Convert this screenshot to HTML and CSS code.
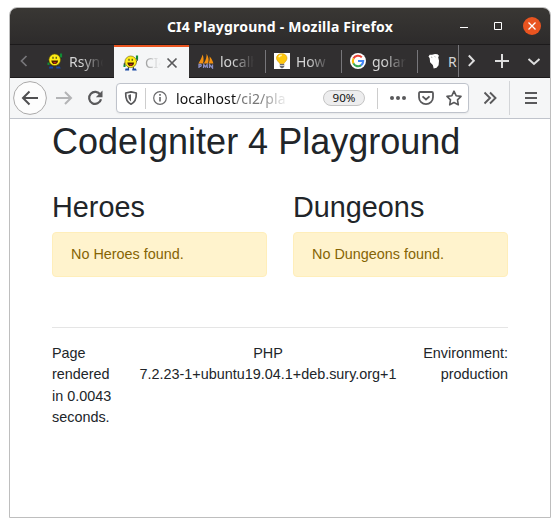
FILE: index.html
```html
<!DOCTYPE html>
<html lang="en">
<head>
<meta charset="utf-8">
<title>CI4 Playground</title>
<link rel="stylesheet" href="styles.css">
</head>
<body>
<svg class="defs" width="0" height="0">
  <defs>
    <symbol id="smiley" viewBox="0 0 16 16">
      <path d="M2.800 7 1 8.700l.8 1.700M12.700 7.500l1.600-2.200-.2-2.800M5.500 11.500l-.3 3M10 11.500l.8 3" fill="none" stroke="#222" stroke-width="1"/>
      <path d="M.5 9.500h2v2.500h-2zM12.900.4h2.200v4h-2.200z" fill="#118c35"/>
      <path d="M2.500 13.400h3.600v2H2zM9.300 13.400h3.500l1 2H9.300z" fill="#1746a5"/>
      <circle cx="7.700" cy="6.800" r="5.800" fill="#ffed14" stroke="#665c00" stroke-width=".6"/>
      <path d="M4.300 7.500h6.800c-.2 2.600-1.700 3.600-3.400 3.600S4.500 10 4.300 7.500z" fill="#4a1d00"/>
      <path d="M6 9.200h3.600L8 10.700z" fill="#e33324"/>
      <path d="M6 3.800v2M9.200 3.800v2" stroke="#222" stroke-width="1"/>
    </symbol>
  </defs>
</svg>
<div class="window">
  <header class="titlebar">
    <span class="title">CI4 Playground - Mozilla Firefox</span>
    <div class="controls">
      <svg width="10" height="20" viewBox="0 0 10 20"><path d="M1 11.500h8" stroke="#fff"/></svg>
      <svg width="10" height="20" viewBox="0 0 10 20"><path d="M1.500 6.500h7v7h-7z" fill="none" stroke="#fff"/></svg>
      <svg width="18" height="20" viewBox="0 0 18 20"><circle cx="9" cy="10" r="9" fill="#e95420"/><path d="m5.500 6.500 7 7m0-7-7 7" stroke="#fff" stroke-width="1.300"/></svg>
    </div>
  </header>

  <nav class="tabs">
    <div class="scroll-left"><svg width="10" height="14" viewBox="0 0 10 14"><path d="M7.500 2 2.500 7l5 5" fill="none" stroke="#77767a" stroke-width="1.700"/></svg></div>
    <div class="tab"><svg width="16" height="16"><use href="#smiley"/></svg><span class="label">Rsync</span></div>
    <div class="tab active"><svg width="16" height="16"><use href="#smiley"/></svg><span class="label">CI4</span>
      <svg class="close" width="12" height="12" viewBox="0 0 12 12"><path d="m1.500 1.500 9 9m0-9-9 9" stroke="#5a5a5c" stroke-width="1.700"/></svg></div>
    <div class="tab"><svg width="16" height="16" viewBox="0 0 16 16"><path d="M.4 10.600C2.500 7 4 4 4.600 1.500 5.700 4 5.900 8 5 10.600zM5.800 10.600C8 7 8.800 3.500 8.600.7c2 3 2.700 7 1.300 9.900zM10.500 10.600c1.200-2.600 1.400-5 1.100-7.200 2 2 3.300 4.600 3.800 7.200z" fill="#f29111"/><path d="M1 15v-3.500h1.800q1 1-.2 1.900H1M5.500 15l.3-3.500 1.700 2.300 1.600-2.300.3 3.500M11.500 15v-3.500l3 3.500v-3.500" fill="none" stroke="#8b8fc2" stroke-width="1.300"/></svg><span class="label">localh</span></div>
    <div class="tab ruled"><svg width="16" height="16" viewBox="0 0 16 16"><path d="M0 0h16v16H0z" fill="#fff"/><path d="M5.700 10.500C5 8.800 2.500 7.800 2.500 5.200 2.500 2.400 4.700.7 7.800.7S13 2.500 13 5.200c0 2.500-2.300 3.600-3 5.300z" fill="#ffc90e" stroke="#d69a00" stroke-width=".6"/><path d="M4.800 4.200c.5-1.500 1.700-2 3-2" fill="none" stroke="#fff6b8" stroke-width="1.400"/><path d="M5.800 11h4.400v3L8 15.400 5.800 14z" fill="#6c6c72"/><path d="M6 12.500h4" stroke="#ccc"/></svg><span class="label">How</span></div>
    <div class="tab ruled"><svg width="16" height="16" viewBox="0 0 16 16"><circle cx="8" cy="8" r="8" fill="#fff"/><g fill="none" stroke-width="2.100"><path d="M11.800 4.400A5.200 5.200 0 0 0 3.400 5.500" stroke="#ea4335"/><path d="M3.500 5.400a5.200 5.200 0 0 0 0 5.200" stroke="#fbbc05"/><path d="M3.400 10.400a5.200 5.200 0 0 0 7.800 1.800" stroke="#34a853"/><path d="M11 12.300A5.200 5.200 0 0 0 13.200 8H8" stroke="#4285f4"/></g></svg><span class="label">golar</span></div>
    <div class="tab ruled last"><svg width="16" height="16" viewBox="0 0 16 16"><path d="m2.500 3.500 1.200-1.800 2.300.1 3-.9 2.500.3 1.500 1.500-.8 1.600.8 3.500-.4 4.500-2 2.500-2.900.6-.9-3.500-2.700-2.600-.4-4z" fill="#fff"/><path d="m5 4 1.300.5M8.500 3.500l1 .5" stroke="#999" stroke-width=".8"/></svg><span class="label">R</span></div>
    <div class="tab-actions">
      <svg width="28" height="28" viewBox="0 0 28 28"><path d="m10.800 8.500 5 5.200-5 5.200" fill="none" stroke="#ddd" stroke-width="2"/></svg>
      <svg width="32" height="28" viewBox="0 0 32 28"><path d="M9 14h14M16 7v14" stroke="#ddd" stroke-width="2"/></svg>
      <svg width="31" height="28" viewBox="0 0 31 28"><path d="m10.500 12 5.500 5 5.500-5" fill="none" stroke="#ddd" stroke-width="2"/></svg>
    </div>
  </nav>

  <div class="toolbar">
    <svg class="back" width="34" height="34" viewBox="0 0 34 34"><circle cx="17" cy="17" r="16.400" fill="#fdfdfd" stroke="#aaa9a9"/><path d="M25 17H10m6.500-6.500L10 17l6.500 6.500" fill="none" stroke="#505052" stroke-width="2"/></svg>
    <svg class="forward" width="18" height="18" viewBox="0 0 18 18"><path d="M1 9h15M10 3l6 6-6 6" fill="none" stroke="#b3b4b6" stroke-width="2"/></svg>
    <svg class="reload" width="18" height="18" viewBox="0 0 18 18"><path d="M14.300 5.800A6 6 0 1 0 15 10.200" fill="none" stroke="#59595b" stroke-width="2.200"/><path d="M16.500 1.500v6.800H9.800z" fill="#59595b"/></svg>
    <div class="urlbar">
      <svg class="shield" width="14" height="16" viewBox="0 0 14 16"><path d="M7 1.800 12.300 3c.2 5.200-1 9.200-5.300 11.200C2.700 12.200 1.500 8.200 1.700 3z" fill="none" stroke="#59595b" stroke-width="1.700" stroke-linejoin="round"/><path d="M7 4.300v7.200C5 10 4.300 7.800 4.300 4.900z" fill="#59595b"/></svg>
      <i class="rule"></i>
      <svg class="info" width="16" height="16" viewBox="0 0 16 16"><circle cx="8" cy="8" r="6.300" fill="none" stroke="#68686a" stroke-width="1.200"/><path d="M8 7v4.500M8 4v1.700" stroke="#59595b" stroke-width="1.500"/></svg>
      <span class="url">localhost<span class="path">/ci2/pla</span></span>
      <span class="zoom">90%</span>
      <i class="rule end"></i>
      <svg class="dots" width="18" height="16" viewBox="0 0 18 16"><g fill="#59595b"><circle cx="3" cy="8" r="2"/><circle cx="9" cy="8" r="2"/><circle cx="15" cy="8" r="2"/></g></svg>
      <svg class="pocket" width="16" height="16" viewBox="0 0 16 16"><path d="M2.200 2h11.600q1.200 0 1.200 1.200v4a7 6.900 0 0 1-14 0v-4Q1 2 2.200 2z" fill="none" stroke="#59595b" stroke-width="1.800"/><path d="m4.500 6.300 3.500 3.200 3.500-3.200" fill="none" stroke="#59595b" stroke-width="1.800"/></svg>
      <svg class="star" width="16" height="16" viewBox="0 0 16 16"><path d="m8 1.200 2.100 4.500 4.900.7-3.500 3.500.8 4.900L8 12.500l-4.300 2.300.8-4.900L1 6.400l4.900-.7z" fill="none" stroke="#59595b" stroke-width="1.600" stroke-linejoin="round"/></svg>
    </div>
    <svg class="more" width="14" height="14" viewBox="0 0 14 14"><path d="M1.500 1.500 7 7l-5.500 5.500M7 1.500 12.500 7 7 12.500" fill="none" stroke="#59595b" stroke-width="1.900"/></svg>
    <i class="menu-rule"></i>
    <svg class="menu" width="12" height="14" viewBox="0 0 12 14"><path d="M0 2h12M0 7h12M0 12h12" stroke="#59595b" stroke-width="1.900"/></svg>
  </div>

  <main class="page">
    <h1>CodeIgniter 4 Playground</h1>
    <div class="columns">
      <section><h2>Heroes</h2><div class="alert">No Heroes found.</div></section>
      <section><h2>Dungeons</h2><div class="alert">No Dungeons found.</div></section>
    </div>
    <footer>
      <div class="rendered">Page rendered in 0.0043 seconds.</div>
      <div class="version">PHP<br>7.2.23-1+ubuntu19.04.1+deb.sury.org+1</div>
      <div class="environment">Environment: production</div>
    </footer>
  </main>
</div>
</body>
</html>
```
FILE: styles.css
```css
* { box-sizing: border-box; }
body { margin: 0; background: #fff; }
svg { display: block; flex: none; }
.defs { height: 0; }

.window {
  width: 542px;
  height: 511px;
  margin: 7px 0 0 9px;
  border: 1px solid #bebebe;
  border-radius: 8px 8px 0 0;
  overflow: hidden;
  background: #fff;
  font-family: "Noto Sans", sans-serif;
}

.titlebar {
  display: grid;
  grid-template-columns: 1fr;
  align-items: center;
  height: 37px;
  background: linear-gradient(#393734, #2d2b2b);
  border-bottom: 1px solid #1c1a1b;
  color: #fff;
}
.title, .controls { grid-area: 1 / 1; }
.title {
  justify-self: center;
  font-size: 14px;
  font-weight: 700;
  letter-spacing: .22px;
  white-space: nowrap;
}
.controls {
  display: flex;
  justify-content: flex-end;
  align-items: center;
  padding-right: 9px;
  gap: 24px;
}
.controls svg:last-child { margin-left: -4px; }

.tabs {
  display: flex;
  height: 33px;
  background: #312f30;
  border-bottom: 1px solid #1c1a1b;
}
.scroll-left {
  display: flex;
  align-items: center;
  width: 28px;
  padding: 0 0 1px 9px;
}
.tab {
  display: flex;
  align-items: center;
  flex: none;
  width: 76px;
  padding-left: 9px;
  gap: 6px;
  color: #d5d5d5;
  font-size: 14px;
}
.tab.ruled {
  background: linear-gradient(#77767a, #77767a) 0 5px / 1px 23px no-repeat;
}
.tab.active {
  height: 33px;
  width: 75px;
  background: #f5f6f7;
  border-top: 2px solid #e95420;
  color: #777;
}
.label {
  width: 35px;
  overflow: hidden;
  white-space: nowrap;
  mask-image: linear-gradient(to right, #000 35%, transparent 98%);
}
.active .label {
  width: 16px;
  mask-image: linear-gradient(to right, rgba(0, 0, 0, .7), transparent);
}
.active .close { margin-left: -1px; }
.tab.last { width: 41px; }
.last .label { width: 10px; mask-image: none; }
.tab-actions {
  display: flex;
  align-items: center;
  flex: 1;
  background: linear-gradient(#77767a, #77767a) 0 0 / 1px 32px no-repeat;
}

.toolbar {
  display: flex;
  align-items: center;
  height: 41px;
  padding-left: 3px;
  background: #f5f6f7;
  border-bottom: 1px solid #c0c4cc;
}
.forward { margin-left: 8px; }
.reload { margin-left: 13px; }
.urlbar {
  display: flex;
  align-items: center;
  flex: none;
  width: 353px;
  height: 30px;
  margin-left: 12px;
  padding-left: 7px;
  border: 1px solid #bfc3cb;
  border-radius: 4px;
  background: #fff;
  box-shadow: 0 1px 2px rgba(0, 0, 0, .06);
}
.rule { width: 1px; height: 21px; margin-left: 7px; background: #cdcdcd; }
.info { margin-left: 6px; }
.url {
  width: 114px;
  margin-left: 8px;
  overflow: hidden;
  white-space: nowrap;
  color: #111;
  font-size: 14px;
  letter-spacing: .1px;
  mask-image: linear-gradient(to right, #000 73%, transparent 99%);
}
.path { color: #777; }
.zoom {
  width: 42px;
  height: 16px;
  margin-left: 33px;
  border: 1px solid #c4c4c4;
  border-radius: 8px;
  background: #ededee;
  color: #111;
  font-size: 11.6px;
  line-height: 14px;
  text-align: center;
}
.rule.end { margin-left: 12px; }
.dots { margin-left: 11px; }
.pocket { margin-left: 11px; }
.star { margin-left: 12px; }
.more { margin-left: 14px; }
.menu-rule { width: 1px; height: 34px; margin-left: 12px; background: #d3d5d8; }
.menu { margin-left: 15px; }

.page {
  padding: .6px 42px 0;
  color: #212529;
  font-family: "Liberation Sans", sans-serif;
  font-size: 14.4px;
  line-height: 21.6px;
}
h1, h2 { margin: 0; font-weight: 400; line-height: 1.2; }
h1 { font-size: 36px; }
h2 { margin-bottom: 7.2px; font-size: 28.8px; }
.columns {
  display: grid;
  grid-template-columns: 1fr 1fr;
  gap: 26px;
  margin-top: 27.2px;
}
.alert {
  padding: 10.8px 18px;
  border: 1px solid #ffeeba;
  border-radius: 4px;
  background: #fff3cd;
  color: #856404;
}
footer {
  display: flex;
  justify-content: space-between;
  margin-top: 50px;
  padding-top: 14.8px;
  border-top: 1px solid #e5e5e5;
}
.rendered { width: 62px; }
.version { text-align: center; }
.environment { width: 86px; text-align: right; }
```
